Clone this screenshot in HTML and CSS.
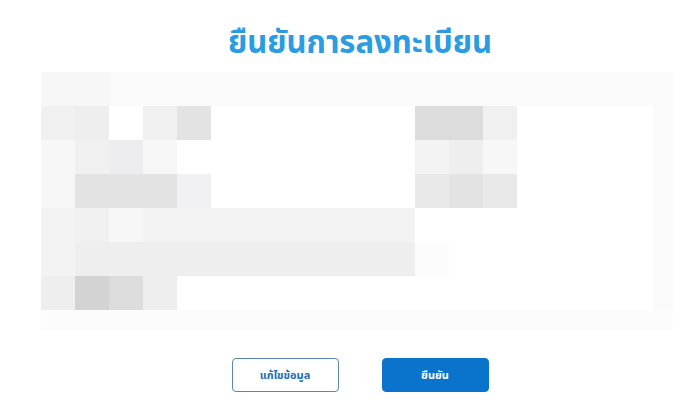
FILE: index.html
```html
<!DOCTYPE html>
<html lang="th">
<head>
<meta charset="utf-8">
<title>ยืนยันการลงทะเบียน</title>
<link rel="stylesheet" href="styles.css">
</head>
<body>
<main class="page">
  <h1 class="title">ยืนยันการลงทะเบียน</h1>
  <div class="mosaic" aria-label="ข้อมูลที่ถูกซ่อน">
    <!-- row 0 -->
    <i class="s3"></i><i class="s3"></i><i class="s2"></i><i class="s2"></i><i class="s2"></i><i class="s2"></i><i class="s2"></i><i class="s2"></i><i class="s2"></i><i class="s2"></i><i class="s2"></i><i class="s2"></i><i class="s2"></i><i class="s2"></i><i class="s2"></i><i class="s2"></i><i class="s2"></i><i class="s2"></i><i class="s2"></i>
    <!-- row 1 -->
    <i class="s5"></i><i class="s6"></i><i></i><i class="s5"></i><i class="s8"></i><i></i><i></i><i></i><i></i><i></i><i></i><i class="s9"></i><i class="s9"></i><i class="s5"></i><i></i><i></i><i></i><i></i><i class="s2"></i>
    <!-- row 2 -->
    <i class="s3"></i><i class="s5"></i><i class="s6b"></i><i class="s3"></i><i></i><i></i><i></i><i></i><i></i><i></i><i></i><i class="s4"></i><i class="s6"></i><i class="s3"></i><i></i><i></i><i></i><i></i><i class="s2"></i>
    <!-- row 3 -->
    <i class="s3"></i><i class="s8"></i><i class="s8"></i><i class="s8"></i><i class="s5b"></i><i></i><i></i><i></i><i></i><i></i><i></i><i class="s7"></i><i class="s8"></i><i class="s7"></i><i></i><i></i><i></i><i></i><i class="s2"></i>
    <!-- row 4 -->
    <i class="s4"></i><i class="s5"></i><i class="s3"></i><i class="s4"></i><i class="s4"></i><i class="s4"></i><i class="s4"></i><i class="s4"></i><i class="s4"></i><i class="s4"></i><i class="s4"></i><i></i><i></i><i></i><i></i><i></i><i></i><i></i><i class="s2"></i>
    <!-- row 5 -->
    <i class="s4"></i><i class="s6"></i><i class="s6"></i><i class="s6"></i><i class="s6"></i><i class="s6"></i><i class="s6"></i><i class="s6"></i><i class="s6"></i><i class="s6"></i><i class="s6"></i><i class="s1"></i><i></i><i></i><i></i><i></i><i></i><i></i><i class="s2"></i>
    <!-- row 6 -->
    <i class="s6"></i><i class="s10"></i><i class="s9"></i><i class="s6"></i><i></i><i></i><i></i><i></i><i></i><i></i><i></i><i></i><i></i><i></i><i></i><i></i><i></i><i></i><i class="s2"></i>
    <!-- row 7 -->
    <i class="s1"></i><i class="s1"></i><i class="s1"></i><i class="s1"></i><i class="s1"></i><i class="s1"></i><i class="s1"></i><i class="s1"></i><i class="s1"></i><i class="s1"></i><i class="s1"></i><i class="s1"></i><i class="s1"></i><i class="s1"></i><i class="s1"></i><i class="s1"></i><i class="s1"></i><i class="s1"></i><i class="s1"></i>
  </div>
  <div class="actions">
    <button class="btn btn-outline" type="button">แก้ไขข้อมูล</button>
    <button class="btn btn-primary" type="button">ยืนยัน</button>
  </div>
</main>
</body>
</html>
```

FILE: styles.css
```css
html, body {
  margin: 0;
  padding: 0;
  background: #ffffff;
}

body {
  font-family: "Noto Sans Thai", "Noto Sans", "Liberation Sans", sans-serif;
  width: 700px;
  height: 418px;
  overflow: hidden;
}

.page {
  padding: 0 27px 0 41px;
  display: flex;
  flex-direction: column;
}

.title {
  margin: 0;
  padding: 24px 0 0 6px;
  height: 72px;
  box-sizing: border-box;
  text-align: center;
  font-size: 31px;
  line-height: 40px;
  font-weight: 700;
  color: #2a9ce4;
  letter-spacing: 0;
}

.mosaic {
  display: grid;
  grid-template-columns: repeat(18, 34px) 20px;
  grid-template-rows: repeat(7, 34px) 20px;
  width: 632px;
  height: 258px;
}

.mosaic i {
  display: block;
  background: #ffffff;
}

.mosaic .s1 { background: #fcfcfc; }
.mosaic .s2 { background: #fafafa; }
.mosaic .s3 { background: #f7f7f7; }
.mosaic .s4 { background: #f3f3f3; }
.mosaic .s5 { background: #f0f0f0; }
.mosaic .s5b { background: #f1f1f3; }
.mosaic .s6 { background: #eeeeee; }
.mosaic .s6b { background: #ededef; }
.mosaic .s7 { background: #e9e9e9; }
.mosaic .s8 { background: #e3e3e3; }
.mosaic .s9 { background: #dcdcdc; }
.mosaic .s10 { background: #d3d3d3; }

.actions {
  display: flex;
  justify-content: center;
  gap: 43px;
  padding: 28px 0 0 6px;
}

.btn {
  width: 107px;
  height: 34px;
  border-radius: 4px;
  font-family: "Noto Sans Thai", "Noto Sans", "Liberation Sans", sans-serif;
  font-size: 11px;
  font-weight: 700;
  cursor: pointer;
  padding: 0;
  box-sizing: border-box;
}

.btn-outline {
  background: #ffffff;
  border: 1px solid #5b87ab;
  color: #1d6db3;
}

.btn-primary {
  background: #0a74cc;
  border: 1px solid #0a74cc;
  color: #ffffff;
}
```
